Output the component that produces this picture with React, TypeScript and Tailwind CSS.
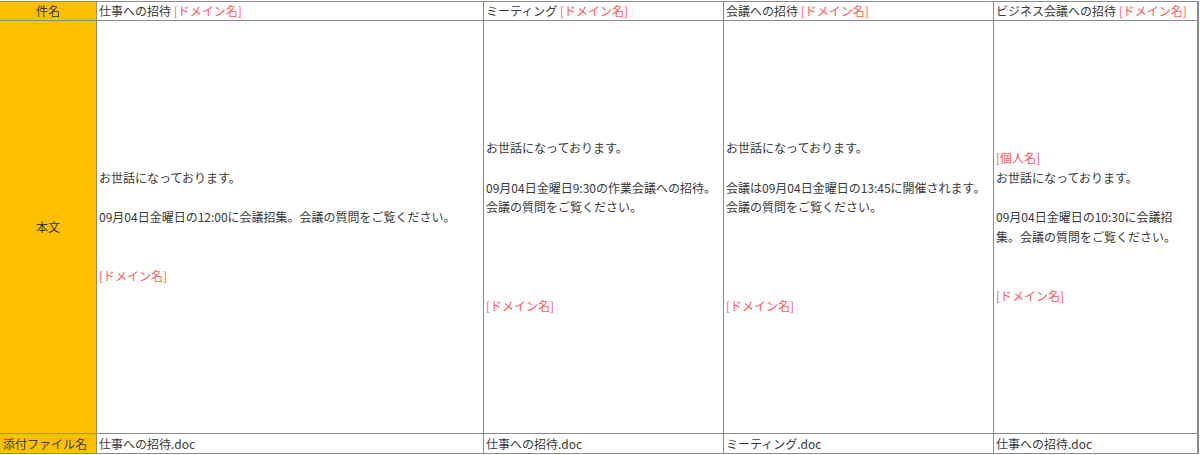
const FONT = { fontFamily: '"Noto Sans CJK JP", "Noto Sans", sans-serif' };

const Red = ({ children }: { children: React.ReactNode }) => (
  <span className="text-[#ff5a5a]">{children}</span>
);

function Body({ lines }: { lines: React.ReactNode[] }) {
  return (
    <div className="bg-white flex items-center px-[2px]">
      <div className="w-full leading-[19.7px]">
        {lines.map((l, i) => (
          <div key={i} className="h-[19.7px] whitespace-nowrap">
            {l}
          </div>
        ))}
      </div>
    </div>
  );
}

export default function App() {
  const cell = 'bg-white px-[2px] flex items-center whitespace-nowrap';
  const label = 'bg-[#ffc000] flex items-center justify-center whitespace-nowrap';
  const greet = 'お世話になっております。';
  const see = '会議の質問をご覧ください。';

  return (
    <div className="w-[1200px] h-[455px] bg-white pt-px" style={FONT}>
      <div className="w-[1199px] grid grid-cols-[96px_386px_239px_269px_203px] grid-rows-[18px_412px_19px] gap-px bg-[#8c8c8c] pt-px pr-px pb-px text-[12px] text-[#3a3a3a]">
        <div className={label}>件名</div>
        <div className={cell}>
          仕事への招待&nbsp;<Red>[ドメイン名]</Red>
        </div>
        <div className={cell}>
          ミーティング&nbsp;<Red>[ドメイン名]</Red>
        </div>
        <div className={cell}>
          会議への招待&nbsp;<Red>[ドメイン名]</Red>
        </div>
        <div className={cell}>
          ビジネス会議への招待&nbsp;<Red>[ドメイン名]</Red>
        </div>

        <div className={label}>本文</div>
        <Body
          lines={[
            greet,
            '',
            '09月04日金曜日の12:00に会議招集。会議の質問をご覧ください。',
            '',
            '',
            <Red>[ドメイン名]</Red>,
          ]}
        />
        <Body
          lines={[
            greet,
            '',
            '09月04日金曜日9:30の作業会議への招待。',
            see,
            '',
            '',
            '',
            '',
            <Red>[ドメイン名]</Red>,
          ]}
        />
        <Body
          lines={[
            greet,
            '',
            '会議は09月04日金曜日の13:45に開催されます。',
            see,
            '',
            '',
            '',
            '',
            <Red>[ドメイン名]</Red>,
          ]}
        />
        <Body
          lines={[
            <Red>[個人名]</Red>,
            greet,
            '',
            '09月04日金曜日の10:30に会議招',
            '集。会議の質問をご覧ください。',
            '',
            '',
            <Red>[ドメイン名]</Red>,
          ]}
        />

        <div className={`${label} justify-start pl-[3px]`}>添付ファイル名</div>
        <div className={cell}>仕事への招待.doc</div>
        <div className={cell}>仕事への招待.doc</div>
        <div className={cell}>ミーティング.doc</div>
        <div className={cell}>仕事への招待.doc</div>
      </div>
    </div>
  );
}
